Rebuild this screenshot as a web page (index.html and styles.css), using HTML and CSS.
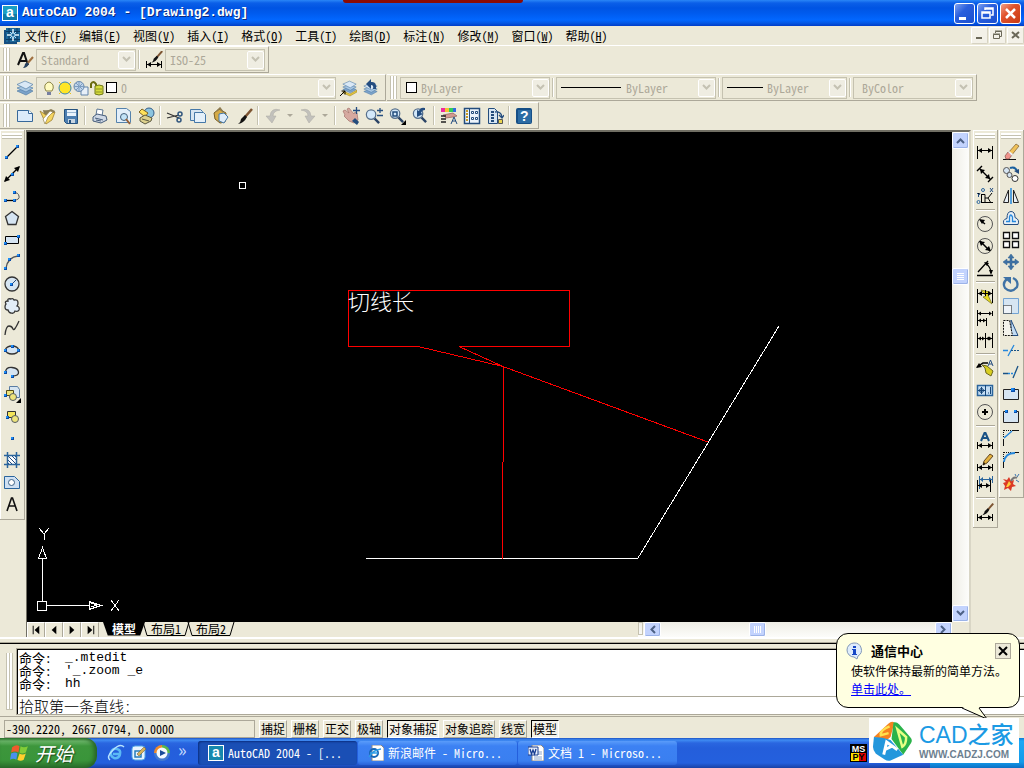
FILE: index.html
```html
<!DOCTYPE html>
<html lang="zh-CN">
<head>
<meta charset="utf-8">
<title>AutoCAD 2004 - [Drawing2.dwg]</title>
<link rel="stylesheet" href="styles.css">
</head>
<body>
<svg class="defs" aria-hidden="true">
  <symbol id="pt" viewBox="0 0 3 3"><path d="M0 0h3v3H0z" fill="#0a4ca8"/><path d="M0 0h2v2H0z" fill="#1c8cf4"/></symbol>
  <symbol id="chev" viewBox="0 0 9 7"><path d="M1 1l3.500 3.500L8 1" fill="none" stroke="currentColor" stroke-width="2"/></symbol>
  <symbol id="hdim" viewBox="0 0 18 18"><path d="M1.500 9v7M16.500 9v7M2 12.500h14" stroke="#000" fill="none"/><path d="M2 12.500l4-2.500v5zM16 12.500l-4-2.500v5z"/></symbol>
  <symbol id="sheets" viewBox="0 0 18 18"><g stroke="#5580a8" stroke-width="0.700"><path d="M1 12l8-3 8 3-7 4z" fill="#7ba3ca"/><path d="M1 9l8-3 8 3-7 4z" fill="#a7c6e2"/><path d="M1 5.500L9 2l8 3.500L10 10z" fill="#d9e8f6"/></g></symbol>
  <symbol id="lens" viewBox="0 0 18 18"><path d="M11 11l5 5" stroke="#2b4466" stroke-width="2.500"/><circle cx="7.500" cy="7" r="5" fill="#d3e8fa" stroke="#57708c" stroke-width="1.300"/></symbol>
  <symbol id="brush" viewBox="0 0 18 18"><path d="M17 2l-7 8" stroke="#7d5432" stroke-width="2.500"/><path d="M10 8l2 2q-3 6-9 7 3-2 3-5z" fill="#111"/></symbol>
</svg>

<header class="titlebar">
  <svg class="appicon" viewBox="0 0 16 16"><path d="M0 0h16v16H0z" fill="#fff"/><path d="M1 1h14v14H1z" fill="#1a9fc4"/><path d="M1 9h14v6H1z" fill="#0d7ba6"/><text x="4" y="12" class="appletter">a</text></svg>
  <h1 class="title">AutoCAD 2004 - [Drawing2.dwg]</h1>
  <div class="winbtns">
    <button class="wbtn" aria-label="最小化"><svg viewBox="0 0 19 19"><path d="M4 13h7v3H4z" fill="#fff"/></svg></button>
    <button class="wbtn" aria-label="还原"><svg viewBox="0 0 19 19"><path d="M7 6V4h8v7h-2M4 8h8v6H4zM4 9h8M7 5h8" fill="none" stroke="#fff" stroke-width="1.500"/></svg></button>
    <button class="wbtn close" aria-label="关闭"><svg viewBox="0 0 19 19"><path d="M5 5l9 9M14 5l-9 9" stroke="#fff" stroke-width="2.500"/></svg></button>
  </div>
</header>
<div class="redtab"></div>

<nav class="menubar">
  <svg class="docicon" viewBox="0 0 16 16"><path d="M0 2h13v14H0z" fill="#164e80"/><path d="M2 0h14v14H2z" fill="#1c6799"/><path d="M5 0v14M13 0v14M2 3.500h14M2 11.500h14" stroke="#0c3b63"/><path d="M9 1v12M3 7h12" stroke="#e4f6ff" stroke-width="1.500"/><path d="M6 4l6 6M12 4l-6 6" stroke="#aee3ff"/><circle cx="9" cy="7" r="1.500" fill="#1c6799"/></svg>
  <button class="menu">文件(<u>F</u>)</button>
  <button class="menu">编辑(<u>E</u>)</button>
  <button class="menu">视图(<u>V</u>)</button>
  <button class="menu">插入(<u>I</u>)</button>
  <button class="menu">格式(<u>O</u>)</button>
  <button class="menu">工具(<u>T</u>)</button>
  <button class="menu">绘图(<u>D</u>)</button>
  <button class="menu">标注(<u>N</u>)</button>
  <button class="menu">修改(<u>M</u>)</button>
  <button class="menu">窗口(<u>W</u>)</button>
  <button class="menu">帮助(<u>H</u>)</button>
  <div class="mdibtns">
    <button class="mbtn" aria-label="最小化文档"><svg viewBox="0 0 15 15"><path d="M4 9h6v2H4z" fill="#6b6858"/></svg></button>
    <button class="mbtn" aria-label="还原文档"><svg viewBox="0 0 15 15"><path d="M5.500 5V3.500h6v5H10M3.500 6.500h6v4h-6zM3 6h7M5 3h7" fill="none" stroke="#6b6858"/></svg></button>
    <button class="mbtn" aria-label="关闭文档"><svg viewBox="0 0 15 15"><path d="M4 4l7 6M11 4l-7 6" stroke="#6b6858" stroke-width="2"/></svg></button>
  </div>
</nav>

<div class="dock">
  <div class="toolbar">
    <i class="grip"></i>
    <button class="tb" aria-label="文字样式"><svg class="ico" viewBox="0 0 18 18"><path d="M2 14L7 2h1l4 12M4 10h6" fill="none" stroke="#111" stroke-width="2"/><path d="M17 6l-7 8" stroke="#a07040" stroke-width="2"/><path d="M11 11l2 2q-2 4-6 4 2-2 2-4z" fill="#26405e"/></svg></button>
    <div class="combo w100"><select disabled aria-label="文字样式"><option>Standard</option></select><span class="drop"><svg><use href="#chev"/></svg></span></div>
    <i class="sep"></i>
    <button class="tb" aria-label="标注样式"><svg class="ico" viewBox="0 0 18 18"><use href="#brush" x="4" y="-2" width="14" height="15"/><path d="M1.500 10v7M16.500 10v7M2 13.500h14" stroke="#000"/><path d="M2 13.500l4-2.500v5zM16 13.500l-4-2.500v5z"/></svg></button>
    <div class="combo w100"><select disabled aria-label="标注样式"><option>ISO-25</option></select><span class="drop"><svg><use href="#chev"/></svg></span></div>
  </div>
</div>

<div class="dock">
  <div class="toolbar">
    <i class="grip"></i>
    <button class="tb" aria-label="图层特性管理器"><svg class="ico"><use href="#sheets"/></svg></button>
    <div class="combo w300">
      <svg class="mini" viewBox="0 0 16 16"><path d="M5 11Q3 8 4 5q4-6 8 0 1 3-1 6z" fill="#fffbc0" stroke="#8d8548"/><path d="M6 12h4v3H6z" fill="#777fa0"/></svg>
      <svg class="mini" viewBox="0 0 16 16"><circle cx="8" cy="8" r="6" fill="#ffe526" stroke="#3b86b8"/><path d="M2 2l2 2M14 2l-2 2M2 14l2-2M14 14l-2-2" stroke="#e5c21a"/></svg>
      <svg class="mini" viewBox="0 0 16 16"><path d="M8 7h7v8H8z" fill="#e8f0f8" stroke="#6384aa"/><circle cx="6" cy="6.500" r="5" fill="#c0d4ea" stroke="#6384aa"/><path d="M6 1v11M1 6.500h10M3 3l7 7M10 3l-7 7" stroke="#7d9dc0"/></svg>
      <svg class="mini" viewBox="0 0 16 16"><path d="M2 8V4q2-4 5 0v3" fill="none" stroke="#6a6a10" stroke-width="2"/><path d="M6 6q4-2 8 0v8q-4 2-8 0z" fill="#d6dc3c" stroke="#6e7618"/><path d="M7 9h6M7 12h6" stroke="#8d9422"/></svg>
      <i class="swatch"></i>
      <select disabled aria-label="图层"><option>0</option></select><span class="drop"><svg><use href="#chev"/></svg></span>
    </div>
    <button class="tb" aria-label="将对象的图层置为当前"><svg class="ico" viewBox="0 0 18 18"><use href="#sheets" x="3" y="0" width="15" height="16"/><path d="M4 12l7 3 7-4v2l-7 4-7-3z" fill="#e8c93a" stroke="#8c7820" stroke-width="0.500"/><path d="M1 17l5-5M2.500 12H6v3.500" stroke="#000" fill="none"/></svg></button>
    <button class="tb" aria-label="上一个图层"><svg class="ico" viewBox="0 0 18 18"><use href="#sheets" x="1" y="2" width="15" height="16"/><path d="M14 10Q15 2 9 3V0L4 5l5 5V6q3 0 2 4z" fill="#244d80"/></svg></button>
  </div>
  <div class="toolbar">
    <i class="grip"></i>
    <div class="combo w150"><i class="swatch"></i><select disabled aria-label="颜色控制"><option>ByLayer</option></select><span class="drop"><svg><use href="#chev"/></svg></span></div>
    <i class="sep"></i>
    <div class="combo w160"><i class="rule long"></i><select disabled aria-label="线型控制"><option>ByLayer</option></select><span class="drop"><svg><use href="#chev"/></svg></span></div>
    <i class="sep"></i>
    <div class="combo w125"><i class="rule"></i><select disabled aria-label="线宽控制"><option>ByLayer</option></select><span class="drop"><svg><use href="#chev"/></svg></span></div>
    <i class="sep"></i>
    <div class="combo w120 plain"><select disabled aria-label="打印样式控制"><option>ByColor</option></select><span class="drop"><svg><use href="#chev"/></svg></span></div>
  </div>
</div>

<div class="dock">
  <div class="toolbar std">
    <i class="grip"></i>
    <button class="tb" aria-label="新建"><svg class="ico" viewBox="0 0 18 18"><path d="M1.500 3.500h11l4 3v8h-15z" fill="#dcebfa" stroke="#37689a"/><path d="M12.500 3.500v3h4" fill="#fff" stroke="#37689a"/></svg></button>
    <button class="tb" aria-label="打开"><svg class="ico" viewBox="0 0 18 18"><path d="M4 3q5 1 8-1l4 2-4 9H6z" fill="#8a7d55"/><path d="M1 4l6 4 9-3-3 8-6 4z" fill="#f5d560" stroke="#95752a" stroke-width="0.700"/><path d="M4 12l7-8 3 1-5 5-3 7z" fill="#fff" stroke="#96854b" stroke-width="0.700"/></svg></button>
    <button class="tb" aria-label="保存"><svg class="ico" viewBox="0 0 18 18"><path d="M2.500 2.500h13v14h-11l-2-2z" fill="#4c7eb0" stroke="#25527f"/><path d="M5 3h9v6H5z" fill="#e9f3fc"/><path d="M5 5.500h9" stroke="#9bb8d3"/><path d="M6 12h7v4H6z" fill="#c7d5e2"/><path d="M7 13h2v3H7z" fill="#25527f"/></svg></button>
    <i class="sep"></i>
    <button class="tb" aria-label="打印"><svg class="ico" viewBox="0 0 18 18"><path d="M5 8l1-6 6 1-1 6" fill="#fff" stroke="#5c7794"/><path d="M2 10l4-3 9 2 1 4-6 3-8-2z" fill="#ced8e5" stroke="#465c7a"/><path d="M4 11l8 2M5 13l5 1" stroke="#465c7a"/></svg></button>
    <button class="tb" aria-label="打印预览"><svg class="ico" viewBox="0 0 18 18"><path d="M2.500 1.500h10l4 3v11h-14z" fill="#e3effa" stroke="#5582ac"/><circle cx="10" cy="10" r="3.500" fill="#c3e3f7" stroke="#45617c"/><path d="M12 12l4 5" stroke="#965e34" stroke-width="2"/></svg></button>
    <button class="tb" aria-label="发布"><svg class="ico" viewBox="0 0 18 18"><circle cx="12" cy="6" r="5" fill="#8cc4de" stroke="#345c88"/><path d="M2 5l3-3 6 4-3 4z" fill="#ffe25a" stroke="#806420"/><path d="M3 11l5-3 7 3-1 3-6 3-5-3z" fill="#ddd18d" stroke="#5b5942"/><path d="M5 12l7 2" stroke="#5b5942"/></svg></button>
    <i class="sep"></i>
    <button class="tb" aria-label="剪切"><svg class="ico" viewBox="0 0 18 18"><path d="M1 6l12 5M1 11l12-3" stroke="#333" stroke-width="1.200"/><circle cx="14" cy="7" r="2" fill="none" stroke="#31567e" stroke-width="1.500"/><circle cx="13" cy="13" r="2" fill="none" stroke="#31567e" stroke-width="1.500"/></svg></button>
    <button class="tb" aria-label="复制"><svg class="ico" viewBox="0 0 18 18"><path d="M1.500 2.500h10l2 2v9h-12z" fill="#d6e5f2" stroke="#4578a8"/><path d="M5.500 5.500h9l2 2v8h-11z" fill="#e4f0fa" stroke="#4578a8"/></svg></button>
    <button class="tb" aria-label="粘贴"><svg class="ico" viewBox="0 0 18 18"><path d="M2 6l5-4 7 4-1 9-5 1-5-4z" fill="#d5ab48" stroke="#755d28"/><path d="M7 7l5-1 4 4-4 6-5-2z" fill="#deecf9" stroke="#4578a8"/><path d="M5 4l3-3 3 4" fill="none" stroke="#8d7b50" stroke-width="1.500"/></svg></button>
    <button class="tb" aria-label="特性匹配"><svg class="ico"><use href="#brush"/></svg></button>
    <i class="sep"></i>
    <button class="tb" disabled aria-label="放弃"><svg class="ico" viewBox="0 0 18 18"><path d="M16 3Q7 0 6 9H2l6 7 4-7H9q0-5 7-6z" fill="#c2c1bc" stroke="#aaa9a3" stroke-width="0.500"/></svg></button><button class="tiny" disabled aria-label="放弃列表"><i></i></button>
    <button class="tb" disabled aria-label="重做"><svg class="ico" viewBox="0 0 18 18"><path d="M2 3q9-3 10 6h4l-6 7-4-7h3Q9 4 2 3z" fill="#c2c1bc" stroke="#aaa9a3" stroke-width="0.500"/></svg></button><button class="tiny" disabled aria-label="重做列表"><i></i></button>
    <i class="sep wide"></i>
    <button class="tb" aria-label="实时平移"><svg class="ico" viewBox="0 0 18 18"><path d="M1 4l2-1 4 3-2-4 2-1 5 6 1-2 2 1 1 7-4 3-5-2-5-5 1-1z" fill="#d6a9a0" stroke="#a4736c" stroke-width="0.700"/><path d="M10 14l3-3 4 4-2 3z" fill="#234c7c"/><path d="M14.500 0v7M11 3.500h7" stroke="#244d80" stroke-width="1.300"/></svg></button>
    <button class="tb" aria-label="实时缩放"><svg class="ico" viewBox="0 0 18 18"><use href="#lens" x="-1" y="1" width="17" height="17"/><path d="M12 3.500h6M15 1v5M12 8.500h6" stroke="#264f80" stroke-width="1.300"/></svg></button>
    <button class="tb" aria-label="窗口缩放"><svg class="ico" viewBox="0 0 18 18"><use href="#lens" width="17" height="17"/><path d="M5 5h4v4H5z" fill="none" stroke="#234c7c" stroke-width="1.500"/><path d="M18 13v5h-5z"/></svg></button>
    <button class="tb" aria-label="缩放上一个"><svg class="ico" viewBox="0 0 18 18"><use href="#lens" width="17" height="17"/><path d="M14 1q-5-1-6 3L6 3v7l6-3-2-1q1-3 4-3z" fill="#244d80"/></svg></button>
    <i class="sep"></i>
    <button class="tb" aria-label="特性"><svg class="ico" viewBox="0 0 18 18"><path d="M1 1h4v4H1z" fill="#f0289d"/><path d="M5 1h4v4H5z" fill="#f5c331"/><path d="M9 1h4v4H9z" fill="#30cc5a"/><path d="M13 1h3v4h-3z" fill="#316be0"/><path d="M3 8l10-2 4 3-4 1-7 1z" fill="#d39a91" stroke="#8b5d58" stroke-width="0.700"/><path d="M1 9h5M1 12h5M1 15h5" stroke="#222" stroke-width="1.500"/><path d="M11 17l3-7 3 7M12 14h4" fill="none" stroke="#244d80"/></svg></button>
    <button class="tb" aria-label="设计中心"><svg class="ico" viewBox="0 0 18 18"><path d="M1.500 1.500h15v15h-15z" fill="#edf4fb" stroke="#234c7c" stroke-width="1.500"/><path d="M6.500 1v16" stroke="#234c7c"/><path d="M3 4h2M3 7h2M3 10h2M3 13h2" stroke="#c59a24" stroke-width="2"/><path d="M8.500 4.500h2v2h-2zM12.500 4.500h2v2h-2zM8.500 10.500h2v2h-2zM12.500 10.500h2v2h-2z" fill="#fff" stroke="#234c7c"/></svg></button>
    <button class="tb" aria-label="工具选项板"><svg class="ico" viewBox="0 0 18 18"><path d="M2.500 1.500h6l3 3v12h-9z" fill="#d6e5f2" stroke="#234c7c"/><path d="M5 5h3M5 8h3M5 11h3M5 14h3" stroke="#234c7c" stroke-width="2"/><path d="M9 5q6-1 7 5m-3-2l3 3 2-3" fill="none" stroke="#244d80" stroke-width="1.300"/><path d="M12.500 12.500h4v4h-4z" fill="#e9d44f" stroke="#555"/></svg></button>
    <i class="sep"></i>
    <button class="tb" aria-label="帮助"><svg class="ico" viewBox="0 0 18 18"><rect x="1" y="1" width="16" height="16" rx="2" fill="#164f86"/><path d="M3 3h13v13H3z" fill="#2c6ca4"/><text x="5" y="14" class="qmark">?</text></svg></button>
  </div>
</div>

<main class="work">
  <div class="vbar draw">
    <i class="vgrip"></i>
    <button class="tb" aria-label="直线"><svg class="ico" viewBox="0 0 18 18"><path d="M4 14L14 4" stroke="#000" stroke-width="1.300"/><use href="#pt" x="2" y="13" width="3" height="3"/><use href="#pt" x="13" y="2" width="3" height="3"/></svg></button>
    <button class="tb" aria-label="构造线"><svg class="ico" viewBox="0 0 18 18"><path d="M2 16L16 2" stroke="#000" stroke-width="1.300"/><path d="M1 17l2-6 4 4zM17 1l-2 6-4-4z"/><use href="#pt" x="8" y="8" width="3" height="3"/></svg></button>
    <button class="tb" aria-label="多段线"><svg class="ico" viewBox="0 0 18 18"><path d="M2 13.500h9" stroke="#000" stroke-width="1.300"/><path d="M11 13q6 0 5-4t-5-3" fill="none" stroke="#555"/><use href="#pt" x="1" y="12" width="3" height="3"/><use href="#pt" x="10" y="12" width="3" height="3"/><use href="#pt" x="10" y="4" width="3" height="3"/></svg></button>
    <button class="tb" aria-label="正多边形"><svg class="ico" viewBox="0 0 18 18"><path d="M9 2.500l6.500 5-2.500 8H5l-2.500-8z" fill="#d6e5f2" stroke="#333" stroke-width="1.300"/></svg></button>
    <button class="tb" aria-label="矩形"><svg class="ico" viewBox="0 0 18 18"><path d="M2.500 5.500h13v7h-13z" fill="#d6e5f2" stroke="#000"/><use href="#pt" x="1" y="11" width="3" height="3"/><use href="#pt" x="14" y="4" width="3" height="3"/></svg></button>
    <button class="tb" aria-label="圆弧"><svg class="ico" viewBox="0 0 18 18"><path d="M3 15Q5 4 15 3" fill="none" stroke="#555" stroke-width="1.300"/><use href="#pt" x="1" y="14" width="3" height="3"/><use href="#pt" x="5" y="5" width="3" height="3"/><use href="#pt" x="14" y="1" width="3" height="3"/></svg></button>
    <button class="tb" aria-label="圆"><svg class="ico" viewBox="0 0 18 18"><circle cx="9" cy="9" r="7" fill="#d6e5f2" stroke="#333" stroke-width="1.300"/><path d="M9 9l4-4" stroke="#244d80"/><use href="#pt" x="7" y="8" width="3" height="3"/></svg></button>
    <button class="tb" aria-label="修订云线"><svg class="ico" viewBox="0 0 18 18"><path d="M5 4Q4 1 8 2q2-1 3 1 4-1 4 3 0 2-1 3 3 1 2 4-1 2-4 1-1 3-4 2-2 0-3-3-3 0-3-3 0-2 1-3-2-3 2-3z" fill="#e2edf7" stroke="#333" stroke-width="1.300"/></svg></button>
    <button class="tb" aria-label="样条曲线"><svg class="ico" viewBox="0 0 18 18"><path d="M2 16Q3 7 6 7t4 3 6-8" fill="none" stroke="#333" stroke-width="1.300"/></svg></button>
    <button class="tb" aria-label="椭圆"><svg class="ico" viewBox="0 0 18 18"><ellipse cx="9" cy="9" rx="6.500" ry="4" fill="#d6e5f2" stroke="#333" stroke-width="1.300"/><use href="#pt" x="1" y="8" width="3" height="3"/><use href="#pt" x="14" y="8" width="3" height="3"/><use href="#pt" x="8" y="4" width="3" height="3"/></svg></button>
    <button class="tb" aria-label="椭圆弧"><svg class="ico" viewBox="0 0 18 18"><path d="M2.500 9Q3 4 9 4.500t6.500 4.500-6.500 4" fill="#d6e5f2" stroke="#333" stroke-width="1.300"/><use href="#pt" x="1" y="8" width="3" height="3"/><use href="#pt" x="8" y="12" width="3" height="3"/></svg></button>
    <button class="tb" aria-label="插入块"><svg class="ico" viewBox="0 0 18 18"><path d="M6.500 1.500h8l2 3v8h-10z" fill="#d6e5f2" stroke="#597ca3"/><path d="M3.500 5.500h7v5h-7z" fill="#eee47c" stroke="#554d16"/><circle cx="10" cy="12" r="3.500" fill="#eee47c" stroke="#555c62"/><use href="#pt" x="1" y="9" width="3" height="3"/><path d="M18 13v5h-5z"/></svg></button>
    <button class="tb" aria-label="创建块"><svg class="ico" viewBox="0 0 18 18"><path d="M4.500 4.500h8v6h-8z" fill="#f3e45a" stroke="#333"/><circle cx="12" cy="12" r="3.500" fill="#eee47c" stroke="#555c62"/><use href="#pt" x="3" y="9" width="3" height="3"/></svg></button>
    <button class="tb" aria-label="点"><svg class="ico" viewBox="0 0 18 18"><use href="#pt" x="8" y="8" width="3" height="3"/></svg></button>
    <button class="tb" aria-label="图案填充"><svg class="ico" viewBox="0 0 18 18"><path d="M4 4h10v10H4z" fill="#fff"/><path d="M4 8l6 6M4 4l10 10M8 4l6 6M4 11l3 3M11 4l3 3" stroke="#244d80"/><path d="M4.500 1v16M13.500 1v16M1 4.500h16M1 13.500h16" stroke="#2b659d" stroke-width="1.500"/></svg></button>
    <button class="tb" aria-label="面域"><svg class="ico" viewBox="0 0 18 18"><path d="M1.500 3.500h10l5 5v7h-15z" fill="#cfe0f2" stroke="#2b659d"/><circle cx="8.500" cy="9.500" r="3" fill="#fff" stroke="#3c6286"/></svg></button>
    <button class="tb" aria-label="多行文字"><svg class="ico" viewBox="0 0 18 18"><path d="M4 16L8.500 3h1L14 16M6 11h6" fill="none" stroke="#111" stroke-width="1.600"/></svg></button>
  </div>

  <section class="viewport">
    <svg class="canvas" role="img" aria-label="图形">
      <g class="crisp">
        <path class="wht" d="M212.500 50.500h6v6h-6zM339 426.500h272M10.500 469.500h9v9h-9zM15.500 469v-42M20 473.500h42M15.500 415.500l-4 11h8z"/>
        <path class="wht" d="M611 426l141-232M62 469.500l12 4-12 4zM64 471l6 2-6 2"/>
        <path class="red" d="M391.500 214.500h-70v-56h221v56h-110"/>
        <path class="red" d="M476.500 234v96"/>
        <path class="red" d="M475.500 330v97"/>
        <path class="red" d="M391 214.500l85 20 205 75.500M432 214.500l44 20"/>
        <path class="wht" d="M12 396l5 6v6M22 396l-5 6M84 468l8 11M92 468l-8 11"/>
      </g>
      <text x="321" y="178" class="note">切线长</text>
    </svg>
    <div class="vscroll">
      <button class="sb" aria-label="向上滚动"><svg class="up"><use href="#chev"/></svg></button>
      <i class="track before"></i>
      <span class="vthumb"><i></i><i></i><i></i><i></i></span>
      <i class="track after"></i>
      <button class="sb" aria-label="向下滚动"><svg><use href="#chev"/></svg></button>
    </div>
    <div class="tabrow">
      <button class="nav" aria-label="第一个"><svg viewBox="0 0 17 14"><path d="M5 3h1v9H5zM12 3v9L7 7.500z"/></svg></button>
      <button class="nav" aria-label="上一个"><svg viewBox="0 0 17 14"><path d="M11 3v9L6 7.500z"/></svg></button>
      <button class="nav" aria-label="下一个"><svg viewBox="0 0 17 14"><path d="M6 3v9l5-4.500z"/></svg></button>
      <button class="nav" aria-label="最后一个"><svg viewBox="0 0 17 14"><path d="M12 3h1v9h-1zM6 3v9l5-4.500z"/></svg></button>
      <div class="tabs">
        <button class="tab on"><svg viewBox="0 0 44 14" preserveAspectRatio="none"><path d="M0 0l5 13.500h34L44 0z" fill="#000"/></svg><span>模型</span></button>
        <button class="tab"><svg viewBox="0 0 48 14" preserveAspectRatio="none"><path d="M1 0l4 13.500h38L47 0" fill="none" stroke="#000"/></svg><span>布局1</span></button>
        <button class="tab"><svg viewBox="0 0 48 14" preserveAspectRatio="none"><path d="M1 0l4 13.500h38L47 0" fill="none" stroke="#000"/></svg><span>布局2</span></button>
      </div>
      <div class="hscroll">
        <i class="split"></i>
        <button class="sb" aria-label="向左滚动"><svg class="left"><use href="#chev"/></svg></button>
        <i class="track before"></i>
        <span class="hthumb"><i></i><i></i><i></i><i></i></span>
        <i class="track rest"></i>
        <button class="sb" aria-label="向右滚动"><svg class="right"><use href="#chev"/></svg></button>
      </div>
    </div>
    <div class="corner"></div>
  </section>

  <div class="vbar dims">
    <i class="vgrip"></i>
    <button class="tb" aria-label="线性标注"><svg class="ico" viewBox="0 0 18 18"><path d="M1.500 3v13M16.500 3v13M2 7.500h14" stroke="#000"/><path d="M2 7.500L6 5v5zM16 7.500L12 5v5z"/></svg></button>
    <button class="tb" aria-label="对齐标注"><svg class="ico" viewBox="0 0 18 18"><path d="M1 6l5-5M12 17l5-5M4 4l10 10" stroke="#000" stroke-width="1.400"/><path d="M4 4l5 1-4 4zM14 14l-5-1 4-4z"/></svg></button>
    <button class="tb" aria-label="坐标标注"><svg class="ico" viewBox="0 0 18 18"><path d="M6 7.500h3v8M6 15.500h11M5.500 7v9M9 11h3l4-5M12 11l3 5" stroke="#000" fill="none"/><path d="M14 1l3 4M17 1l-3 4M1 6l2 2 1-2M2.500 8v2" stroke="#244d80"/><circle cx="7" cy="3" r="1.500" fill="none" stroke="#2b659d"/><circle cx="2.500" cy="15" r="1.500" fill="none" stroke="#2b659d"/></svg></button>
    <i class="vsep"></i>
    <button class="tb" aria-label="半径标注"><svg class="ico" viewBox="0 0 18 18"><circle cx="9" cy="9" r="7.500" fill="none" stroke="#555"/><path d="M9 9L4 5" stroke="#000" stroke-width="1.500"/><path d="M3 4l6 1-3 4z"/></svg></button>
    <button class="tb" aria-label="直径标注"><svg class="ico" viewBox="0 0 18 18"><circle cx="9" cy="9" r="7.500" fill="none" stroke="#555"/><path d="M4 4l10 10" stroke="#000" stroke-width="1.500"/><path d="M3 4l6 1-4 4zM15 14l-6-1 4-4z"/></svg></button>
    <button class="tb" aria-label="角度标注"><svg class="ico" viewBox="0 0 18 18"><path d="M1 16.500h16M2 13L12 2M9 4q6 4 6 10" stroke="#000" stroke-width="1.300" fill="none"/><path d="M15 16l-2-5h4zM8 3l5 1-2 3z"/></svg></button>
    <i class="vsep"></i>
    <button class="tb" aria-label="快速标注"><svg class="ico" viewBox="0 0 18 18"><path d="M5 3l9 2-2 3 4 9-9-7 3-1z" fill="#e6da1e" stroke="#6d6820" stroke-width="0.700"/><path d="M1.500 2v14M16.500 2v14M2 6.500h14M9.500 3v6" stroke="#000"/><path d="M2 6.500L6 4v5zM16 6.500L12 4v5z"/></svg></button>
    <button class="tb" aria-label="基线标注"><svg class="ico" viewBox="0 0 18 18"><path d="M1.500 1v16M2 4.500h13M16.500 2v5M2 11.500h8M10.500 9v8" stroke="#000"/><path d="M2 4.500l3-2v4zM16 4.500l-3-2v4zM2 11.500l3-2v4zM10 11.500l-3-2v4z"/></svg></button>
    <button class="tb" aria-label="连续标注"><svg class="ico" viewBox="0 0 18 18"><path d="M1.500 2v15M9.500 2v15M16.500 2v15M2 7.500h14" stroke="#000"/><path d="M2 7.500l3-2v4zM9 7.500l-3-2v4zM10 7.500l3-2v4zM16 7.500l-3-2v4z"/></svg></button>
    <i class="vsep"></i>
    <button class="tb" aria-label="快速引线"><svg class="ico" viewBox="0 0 18 18"><path d="M6 6l5 1 6 5-2 5-5-3-1-5z" fill="#d8ce22" stroke="#6d6820"/><path d="M1 8l6-4h5" fill="none" stroke="#000" stroke-width="1.500"/><path d="M0 9l3-5 3 4z"/><path d="M12 7l2.500-6L17 7M13 5h3" fill="none" stroke="#244d80"/></svg></button>
    <button class="tb" aria-label="公差"><svg class="ico" viewBox="0 0 18 18"><path d="M1.500 4.500h15v10h-15z" fill="#c5def4" stroke="#2b659d" stroke-width="1.500"/><path d="M9.500 4v11M5.500 6v7M2 9.500h7M12 12h1M14.500 6v7" stroke="#174677"/><circle cx="5.500" cy="9.500" r="2" fill="none" stroke="#174677"/></svg></button>
    <button class="tb" aria-label="圆心标记"><svg class="ico" viewBox="0 0 18 18"><circle cx="9" cy="9" r="7.500" fill="none" stroke="#555"/><path d="M9 6v6M6 9h6" stroke="#000" stroke-width="2"/></svg></button>
    <i class="vsep"></i>
    <button class="tb" aria-label="编辑标注"><svg class="ico" viewBox="0 0 18 18"><use href="#hdim" y="2" width="18" height="18"/><path d="M5 10L8.500 2h1L13 10M6.500 7h5" fill="none" stroke="#195285" stroke-width="2"/></svg></button>
    <button class="tb" aria-label="编辑标注文字"><svg class="ico" viewBox="0 0 18 18"><use href="#hdim" y="2" width="18" height="18"/><path d="M7 12l1-4 6-7 3 2-6 7z" fill="#e4b13d" stroke="#634724"/><path d="M7 12l2-1-1-2z"/></svg></button>
    <button class="tb" aria-label="标注更新"><svg class="ico" viewBox="0 0 18 18"><path d="M3.500 1v13M16.500 1v7M4 4.500h12" stroke="#2b659d"/><path d="M4 4.500L7 2v5zM16 4.500L13 2v5z" fill="#2b659d"/><path d="M1.500 5v12M14.500 5v12M2 10.500h12" stroke="#000"/><path d="M2 10.500L6 8v5zM14 10.500L10 8v5z"/></svg></button>
    <i class="vsep"></i>
    <button class="tb" aria-label="标注样式管理"><svg class="ico" viewBox="0 0 18 18"><use href="#brush" x="4" y="-1" width="14" height="14"/><use href="#hdim" y="2" width="18" height="18"/></svg></button>
  </div>

  <div class="vbar modify">
    <i class="vgrip"></i>
    <button class="tb" aria-label="删除"><svg class="ico" viewBox="0 0 18 18"><path d="M1 16.500h13" stroke="#111"/><path d="M6 10l8-9 3 2-8 10z" fill="#f0c25a" stroke="#7a5a28" stroke-width="0.700"/><path d="M3 13l3-4 4 3-3 4H4z" fill="#f1948b" stroke="#834e48" stroke-width="0.700"/><path d="M6 9l1-1 4 3-1 2z" fill="#eef2f8"/></svg></button>
    <button class="tb" aria-label="复制对象"><svg class="ico" viewBox="0 0 18 18"><circle cx="4.500" cy="5.500" r="3" fill="#d6e5f2" stroke="#555"/><circle cx="7.500" cy="10" r="2.500" fill="#d6e5f2" stroke="#555"/><circle cx="13" cy="13.500" r="3" fill="#fff" stroke="#333"/><path d="M8 3q5-2 7 3" fill="none" stroke="#195f9f" stroke-width="2"/><path d="M17 4v5l-5-3z" fill="#244d80"/></svg></button>
    <button class="tb" aria-label="镜像"><svg class="ico" viewBox="0 0 18 18"><path d="M1.500 15.500h5V3zM16.500 15.500h-5V3z" fill="#e9f0f6" stroke="#222"/><path d="M9 1v16" stroke="#2587dc" stroke-width="1.500"/></svg></button>
    <button class="tb" aria-label="偏移"><svg class="ico" viewBox="0 0 18 18"><path d="M2 15.500q-2-5 3-6 0-7 4-7t4 6q5 2 3 7z" fill="#e9f0f6" stroke="#244d80"/><path d="M4 12.500h3.500V8q1-4 3 0v4.500H14" fill="none" stroke="#2587dc" stroke-width="1.300"/></svg></button>
    <button class="tb" aria-label="阵列"><svg class="ico" viewBox="0 0 18 18"><path d="M1.500 1.500h6v6h-6zM10.500 1.500h6v6h-6zM1.500 10.500h6v6h-6zM10.500 10.500h6v6h-6z" fill="#fff" stroke="#111" stroke-width="1.300"/></svg></button>
    <button class="tb" aria-label="移动"><svg class="ico" viewBox="0 0 18 18"><path d="M9 1l3 4h-2v3h3V6l4 3-4 3v-2h-3v3h2l-3 4-3-4h2v-3H5v2L1 9l4-3v2h3V5H6z" fill="#3f72a5" stroke="#31608e" stroke-width="0.500"/></svg></button>
    <button class="tb" aria-label="旋转"><svg class="ico" viewBox="0 0 18 18"><path d="M5 4q-5 4-2 9 6 6 12-1 2-6-4-9" fill="none" stroke="#3f72a5" stroke-width="2.300"/><path d="M1 2h8v7z" fill="#3f72a5"/></svg></button>
    <button class="tb" aria-label="缩放"><svg class="ico" viewBox="0 0 18 18"><path d="M1.500 1.500h15v15h-15z" fill="#d6e5f2" stroke="#73a3d2"/><path d="M1.500 8.500h8v8h-8z" fill="#eef3f8" stroke="#111" stroke-dasharray="1 1"/></svg></button>
    <button class="tb" aria-label="拉伸"><svg class="ico" viewBox="0 0 18 18"><path d="M9 1l7 15.500H9z" fill="#c3dcf3" stroke="#244d80"/><path d="M1.500 1.500h6l3 15h-9z" fill="#f4f3eb" stroke="#111" stroke-dasharray="2 1"/></svg></button>
    <button class="tb" aria-label="修剪"><svg class="ico" viewBox="0 0 18 18"><path d="M1 9.500h5M6 15l6-11" stroke="#2587dc" stroke-width="1.300"/><path d="M9 9.500h8" stroke="#195285" stroke-dasharray="2 1"/></svg></button>
    <button class="tb" aria-label="延伸"><svg class="ico" viewBox="0 0 18 18"><path d="M11 15l5-12M1 10.500h5" stroke="#195285" stroke-width="1.300"/><path d="M6 10.500h7" stroke="#2587dc" stroke-width="1.300" stroke-dasharray="2 1"/></svg></button>
    <button class="tb" aria-label="打断于点"><svg class="ico" viewBox="0 0 18 18"><path d="M1.500 4.500h15v10h-15z" fill="#d6e5f2" stroke="#222"/><use href="#pt" x="9" y="3" width="4" height="4"/></svg></button>
    <button class="tb" aria-label="打断"><svg class="ico" viewBox="0 0 18 18"><path d="M4 4.500H1.500v11h15v-11H14" fill="#d6e5f2" stroke="#222"/><use href="#pt" x="3" y="3" width="3" height="3"/><use href="#pt" x="12" y="3" width="3" height="3"/></svg></button>
    <button class="tb" aria-label="倒角"><svg class="ico" viewBox="0 0 18 18"><path d="M1.500 10v7M10 1.500h7" stroke="#111"/><path d="M1.500 1v8M2 1.500h8" stroke="#111" stroke-dasharray="1 1"/><path d="M2 9l8-7" stroke="#2587dc" stroke-width="1.500"/></svg></button>
    <button class="tb" aria-label="圆角"><svg class="ico" viewBox="0 0 18 18"><path d="M1.500 10v7M12 1.500h5" stroke="#111"/><path d="M1.500 1v8M2 1.500h8" stroke="#111" stroke-dasharray="1 1"/><path d="M2 11q1-9 11-9" fill="none" stroke="#2587dc" stroke-width="1.800"/></svg></button>
    <button class="tb" aria-label="分解"><svg class="ico" viewBox="0 0 18 18"><path d="M1 6l4 1 2-3 2 4 3-1-1 4 3 2-4 1-1 4-3-3-4 2 1-4-2-3 3-1z" fill="#db3925"/><path d="M4 14l3-6 2 3-3 3z" fill="#ffcd38"/><path d="M9 8q3-5 6-3" fill="none" stroke="#777" stroke-width="2"/><path d="M13 1l1 2M17 1l-2 3M14 7l3 2" stroke="#3772ac"/></svg></button>
  </div>
</main>

<section class="cmdarea">
  <i class="cmdgrip"></i>
  <div class="cmdbox">
    <div class="log">
      <p><span class="who">命令:</span><span class="mono">_.mtedit</span></p>
      <p><span class="who">命令:</span><span class="mono">'_.zoom _e</span></p>
      <p><span class="who">命令:</span><span class="mono">hh</span></p>
    </div>
    <input class="prompt" aria-label="命令行" value="拾取第一条直线:">
  </div>
</section>

<div class="status">
  <output class="coords">-390.2220, 2667.0794, 0.0000</output>
  <button class="st">捕捉</button>
  <button class="st">栅格</button>
  <button class="st">正交</button>
  <button class="st">极轴</button>
  <button class="st down">对象捕捉</button>
  <button class="st">对象追踪</button>
  <button class="st">线宽</button>
  <button class="st down">模型</button>
</div>

<footer class="taskbar">
  <button class="start">
    <svg class="flag" viewBox="0 0 20 20"><path d="M3 4q4-3 7-1L9 9Q6 7 2 9z" fill="#ef5b2c"/><path d="M11 3q3 2 7 0l-2 6q-4 2-6 0z" fill="#82cc37"/><path d="M2 10q4-2 6 0l-1 6q-3-2-6 0z" fill="#4a90ee"/><path d="M10 10q3 2 6 0l-2 6q-3 2-6 0z" fill="#ffd02d"/></svg>
    <span>开始</span>
  </button>
  <div class="quick">
    <button class="ql" aria-label="浏览器"><svg viewBox="0 0 18 18"><path d="M13 11q-2 4-6 3-4-2-3-6 2-4 6-3 4 1 3 5H6" fill="none" stroke="#5bb9f5" stroke-width="2.500"/><path d="M3 16Q-1 13 6 6t11-3" fill="none" stroke="#b8e4ff" stroke-width="1.500"/></svg></button>
    <button class="ql" aria-label="显示桌面"><svg viewBox="0 0 18 18"><rect x="2" y="2" width="13" height="14" rx="3" fill="#e8f4ff" stroke="#54a7e4"/><path d="M12 7H5v6h6V9" fill="none" stroke="#267ebc" stroke-width="1.500"/><path d="M7 10l7-7 2 2-7 7z" fill="#d7b35b" stroke="#674f2b" stroke-width="0.500"/></svg></button>
    <button class="ql" aria-label="媒体播放器"><svg viewBox="0 0 18 18"><path d="M1 9a8 8 0 018-8v8z" fill="#ee8a2c"/><path d="M9 1a8 8 0 018 8H9z" fill="#5ab94b"/><path d="M1 9h16a8 8 0 01-16 0z" fill="#4379ce"/><circle cx="9" cy="9" r="5.500" fill="#f4faff"/><path d="M7 6l6 3-6 3z" fill="#1a4d99"/></svg></button>
    <span class="more">»</span>
  </div>
  <div class="tasks">
    <button class="task on"><svg viewBox="0 0 16 16"><path d="M0 0h16v16H0z" fill="#fff"/><path d="M1 1h14v14H1z" fill="#1688ad"/><text x="4" y="12" class="appletter">a</text></svg><span>AutoCAD 2004 - [...</span></button>
    <button class="task"><svg viewBox="0 0 16 16"><path d="M4 0h9l3 3v13H4z" fill="#fff" stroke="#888"/><circle cx="6" cy="8" r="4" fill="none" stroke="#1666b5" stroke-width="2"/><path d="M2 8h8M1 12Q5 5 13 4" stroke="#2e9ce6" stroke-width="1.500" fill="none"/></svg><span>新浪邮件 - Micro...</span></button>
    <button class="task"><svg viewBox="0 0 16 16"><path d="M4 0h9l3 3v13H4z" fill="#fff" stroke="#888"/><path d="M10 7h4M10 9h4M6 12h8M6 14h8" stroke="#8ba5cd"/><path d="M0 2h10v8H0z" fill="#e6eefc" stroke="#183d91"/><path d="M2 4l1.500 5L5 5l1.500 4L8 4" fill="none" stroke="#183d91" stroke-width="1.300"/></svg><span>文档 1 - Microso...</span></button>
  </div>
  <button class="ime" aria-label="输入法"><span>MS</span><span class="py">PY</span></button>
  <div class="tray"></div>
</footer>

<aside class="balloon">
  <div class="bhead">
    <svg class="info" viewBox="0 0 18 18"><path d="M9 1a7 7 0 014 13l-1 3-3-2A7 7 0 019 1z" fill="#dfecfb" stroke="#8298b8"/><path d="M8 4h3v2H8zM7 7h4v5h1v1H7v-1h1V8H7z" fill="#1748c5"/></svg>
    <strong>通信中心</strong>
    <button class="bclose" aria-label="关闭通知"><svg viewBox="0 0 14 14"><path d="M3 3l8 8M11 3l-8 8" stroke="#000" stroke-width="2"/></svg></button>
  </div>
  <p>使软件保持最新的简单方法。</p>
  <a href="#update">单击此处。</a>
  <svg class="tail" viewBox="0 0 28 13"><path d="M1 0l25 12L18 0z" fill="#ffffe1"/><path d="M1 1l25 11L18 1" fill="none" stroke="#000"/></svg>
</aside>

<aside class="brand">
  <svg class="cube" viewBox="0 0 42 42"><path d="M2 17L17 3q3-3 6-1l-4 15-5 4q-7-3-12-4z" fill="#f58220"/><path d="M22 2q3-1 6 2l11 13q3 3 1 6l-8 12-12-16z" fill="#2bb34a"/><path d="M2 17q9 0 17 3l13 15-13 6q-3 1-6-1L4 34q-3-3-3-7z" fill="#2397dc"/><path d="M12 35l3-13 11 8M13 30l8-4" fill="none" stroke="#fff" stroke-width="3"/><path d="M18 6q-10 4-9 9l8-2" fill="none" stroke="#ffe14e" stroke-width="2.500"/><path d="M26 9l9 8q0 8-4 10z" fill="none" stroke="#e8ff84" stroke-width="2.500"/></svg>
  <div class="brandtext"><span class="bname">CAD之家</span><span class="burl">WWW.CADZJ.COM</span></div>
</aside>
</body>
</html>
```
FILE: styles.css
```css
* { box-sizing: border-box; }

body {
  margin: 0;
  height: 100vh;
  display: flex;
  flex-direction: column;
  overflow: hidden;
  position: relative;
  background: #ece9d8;
  color: #000;
  font-family: "Noto Sans CJK SC", sans-serif;
  font-feature-settings: "hwid";
  font-size: 12px;
  line-height: 16px;
}

button, select, input {
  font: inherit;
  font-feature-settings: inherit;
  color: inherit;
  margin: 0;
  padding: 0;
  border: 0;
  background: none;
}

h1, p { margin: 0; }
svg, i { display: block; flex: none; }
.defs { position: absolute; width: 0; height: 0; }

/* Title bar */
.titlebar {
  display: flex;
  align-items: center;
  gap: 4px;
  height: 26px;
  flex: none;
  padding: 0 3px 0 2px;
  background: linear-gradient(#2a86f7 0, #0b5fe8 3px, #0054e3 8px, #005cf0 14px, #0267ff 20px, #0558e4 23px, #003dc8 26px);
}
.appicon { width: 16px; height: 16px; }
.appletter { font: bold 14px "Liberation Sans", sans-serif; fill: #fff; }
.qmark { font: bold 14px "Liberation Sans", sans-serif; fill: #fff; }
.title {
  flex: 1;
  color: #fff;
  font: bold 13px/18px "Liberation Mono", monospace;
  text-shadow: 1px 1px 0 #0a2a80;
}
.winbtns { display: flex; gap: 2px; }
.wbtn {
  width: 21px;
  height: 21px;
  border: 1px solid #fff;
  border-radius: 3px;
  background: linear-gradient(135deg, #7ea1f0, #2a5fdd 40%, #1b50cf);
}
.wbtn.close { background: linear-gradient(135deg, #f0a088, #e1532c 40%, #c83a12); }
.redtab {
  position: absolute;
  left: 343px;
  top: 0;
  width: 180px;
  height: 3px;
  border-radius: 0 0 6px 6px;
  background: #8c0b05;
}

/* Menu bar */
.menubar {
  display: flex;
  align-items: center;
  gap: 12px;
  height: 20px;
  flex: none;
  padding-left: 4px;
  border-bottom: 1px solid #fff;
}
.docicon { width: 16px; height: 16px; margin-right: -7px; }
.mdibtns { display: flex; gap: 1px; margin-left: auto; }
.mbtn {
  width: 17px;
  height: 17px;
  border: 1px solid #fff;
  border-right-color: #d6d2c2;
  border-bottom-color: #d6d2c2;
  border-radius: 2px;
  background: #f3f1e8;
}

/* Docked horizontal toolbars */
.dock { display: flex; gap: 1px; flex: none; }
.toolbar {
  display: flex;
  align-items: center;
  height: 27px;
  padding: 0 3px;
  border-top: 1px solid #fff;
  border-right: 1px solid #aca899;
  border-bottom: 1px solid #aca899;
  margin-bottom: 1px;
}
.grip {
  width: 7px;
  height: 23px;
  margin-right: 3px;
  border: solid #c5c2b0;
  border-width: 0 1px;
  background: linear-gradient(90deg, #fff 2px, #c5c2b0 2px 3px, #fff 3px);
}
.tb {
  display: flex;
  align-items: center;
  justify-content: center;
  width: 23px;
  height: 22px;
  flex: none;
}
.ico { width: 18px; height: 18px; }
.sep { width: 2px; height: 19px; margin: 0 2px; border-left: 1px solid #c5c2b0; border-right: 1px solid #fff; }
.sep.wide { margin: 0 3px; }
.tiny { width: 12px; height: 22px; display: flex; align-items: center; justify-content: center; }
.tiny i { border: 3px solid transparent; border-top-color: #aca899; border-bottom: 0; }

.combo {
  display: flex;
  align-items: center;
  height: 22px;
  padding-left: 4px;
  border: 1px solid #c5c2b0;
  color: #aca899;
}
.combo.plain { padding-left: 8px; }
.combo select {
  flex: 1;
  min-width: 0;
  appearance: none;
  color: #aca899;
  opacity: 1;
}
.w100 { width: 100px; }
.w120 { width: 120px; }
.w125 { width: 125px; }
.w150 { width: 150px; }
.w160 { width: 160px; }
.w300 { width: 300px; }
.drop {
  display: flex;
  align-items: center;
  justify-content: center;
  width: 17px;
  height: 18px;
  border: 1px solid #fff;
  border-radius: 2px;
  background: #efede2;
  color: #c4c1b2;
}
.drop svg, .sb svg { width: 9px; height: 7px; }
.mini { width: 16px; height: 16px; }
.swatch { width: 11px; height: 11px; margin: 0 4px 0 1px; border: 1px solid #000; background: #fff; }
.rule { width: 36px; height: 1px; margin-right: 4px; background: #000; }
.rule.long { width: 60px; margin-right: 5px; }

/* Work area */
.work { display: flex; flex: 1; min-height: 0; }
.vbar {
  align-self: flex-start;
  display: flex;
  flex-direction: column;
  align-items: center;
  flex: none;
  width: 25px;
  padding: 3px 0 4px;
  border: 1px solid #aca899;
  border-width: 0 1px 1px 0;
  box-shadow: inset 1px 1px 0 #fff;
}
.draw { margin-right: 1px; }
.dims { margin-right: 1px; }
.vgrip {
  width: 20px;
  height: 6px;
  margin-bottom: 2px;
  border: solid #c5c2b0;
  border-width: 0 0 1px;
  background: linear-gradient(#fff 2px, #c5c2b0 2px 3px, #fff 3px);
}
.vsep { width: 19px; height: 2px; margin: 2px 0; border-top: 1px solid #aca899; border-bottom: 1px solid #fff; }

.viewport {
  flex: 1;
  min-width: 0;
  display: grid;
  grid-template: 1fr 16px / 1fr 17px;
  border: solid;
  border-width: 2px 2px 0 1px;
  border-color: #716f64 #d9d6c6 #aca899 #716f64;
  margin-right: 2px;
}
.canvas { width: 100%; height: 100%; background: #000; }
.crisp { shape-rendering: crispEdges; fill: none; }
.wht { stroke: #fff; }
.red { stroke: #f00; }
.note { font-size: 22px; font-weight: 300; fill: #fff; }

.vscroll { display: flex; flex-direction: column; background: linear-gradient(90deg, #eeede5, #fdfdfb); }
.track.before { flex: 27; }
.track.after { flex: 73; }
.track.rest { flex: 50; }
.hscroll .before { flex: 26; }
.sb, .vthumb, .hthumb {
  display: flex;
  align-items: center;
  justify-content: center;
  width: 17px;
  height: 17px;
  flex: none;
  border: 1px solid #fff;
  border-radius: 2px;
  background: #c3d3fd;
  color: #4d6185;
  box-shadow: inset -1px -1px 0 #9cb3e8;
}
.sb svg.up { transform: rotate(180deg); }
.sb svg.left { transform: rotate(90deg); }
.sb svg.right { transform: rotate(-90deg); }
.vthumb, .hthumb { gap: 1px; }
.vthumb { flex-direction: column; }
.vthumb i { width: 7px; height: 1px; background: #fff; }
.hthumb i { width: 1px; height: 7px; background: #fff; }

.tabrow { display: flex; align-items: stretch; min-width: 0; }
.nav { width: 18px; border: 1px solid #fff; border-right-color: #aca899; border-bottom-color: #aca899; flex: none; }
.tabs { display: flex; margin-left: 4px; flex: 1; }
.tab { display: grid; width: 48px; height: 14px; margin-right: -3px; place-items: center; flex: none; line-height: 14px; }
.tab svg, .tab span { grid-area: 1 / 1; }
.tab svg { width: 100%; height: 14px; overflow: visible; }
.tab.on { width: 42px; color: #fff; font-weight: bold; }
.hscroll { display: flex; width: 34%; background: linear-gradient(#eeede5, #fdfdfb); }
.hscroll .sb, .hthumb { height: 15px; }
.split { width: 5px; height: 13px; margin-right: 1px; border: 1px solid #c5c2b0; }
.corner { background: #ece9d8; }

/* Command window */
.cmdarea {
  display: flex;
  flex: none;
  padding: 5px 0 2px 6px;
  border-top: 1px solid #000;
  box-shadow: 0 -1px 0 #aca899, 0 -4px 0 #ece9d8, 0 -6px 0 #fff;
  margin-top: 5px;
  gap: 4px;
}
.cmdgrip { width: 7px; margin: 4px 0; border: solid #c5c2b0; border-width: 0 1px 1px; background: linear-gradient(90deg, #fff 2px, #c5c2b0 2px 3px, #fff 3px); }
.cmdbox {
  flex: 1;
  background: #fff;
  border-left: 1px solid #000;
  border-top: 1px solid #000;
  outline: 1px solid #aca899;
}
.log { padding: 1px 0 6px 1px; border-bottom: 1px solid #aca899; }
.log p { display: flex; align-items: center; height: 13px; font-size: 13px; line-height: 13px; white-space: pre; }
.who { width: 46px; }
.mono { font: 13px/13px "Liberation Mono", monospace; }
.prompt { display: block; width: 100%; height: 17px; padding: 0 0 0 1px; font-size: 15px; font-weight: 300; line-height: 17px; }

/* Status bar */
.status {
  display: flex;
  align-items: center;
  gap: 4px;
  height: 22px;
  flex: none;
  padding: 2px 4px 0;
  border-top: 1px solid #aca899;
}
.coords { width: 251px; height: 18px; border: 1px solid #aca899; padding-left: 1px; white-space: pre; }
.st {
  height: 18px;
  padding: 0 1px;
  border: 1px solid #fff;
  border-right-color: #aca899;
  border-bottom-color: #aca899;
}
.st.down { border-color: #000 #fff #fff #000; background: #f4f2ea; }

/* Taskbar */
.taskbar {
  display: flex;
  align-items: center;
  height: 30px;
  flex: none;
  background: linear-gradient(#1d52c4 0, #3f8cf3 2px, #2a66e0 5px, #245edb 10px, #2460de 25px, #1941a5 30px);
}
.start {
  display: flex;
  align-items: center;
  gap: 5px;
  width: 97px;
  height: 30px;
  padding-left: 9px;
  border-radius: 0 12px 12px 0;
  background: linear-gradient(#2f7d30 0, #6ab568 3px, #3d963c 8px, #3a953a 22px, #2a6f2b 30px);
  box-shadow: inset -3px 0 4px #276327;
  color: #fff;
  font-size: 19px;
  font-style: italic;
  line-height: 24px;
  text-shadow: 1px 1px 1px #1d4a1d;
}
.flag { width: 21px; height: 21px; }
.quick { display: flex; align-items: center; gap: 5px; width: 101px; padding-left: 10px; }
.ql { width: 18px; height: 18px; }
.ql svg { width: 18px; height: 18px; }
.more { color: #c6dcff; font-size: 18px; margin-left: 2px; padding-bottom: 8px; }
.tasks { display: flex; gap: 1px; flex: 1; }
.task {
  display: flex;
  align-items: center;
  gap: 4px;
  width: 159px;
  height: 24px;
  padding: 0 10px;
  border-radius: 3px;
  background: linear-gradient(#5a9cfa, #3c81f3 5px, #3a7ff0 20px, #2a63d8);
  color: #fff;
  white-space: nowrap;
}
.task.on { background: #1a4fb5; box-shadow: inset 1px 1px 2px #0c2f80; }
.task svg { width: 16px; height: 16px; }
.ime {
  width: 17px;
  height: 18px;
  margin-right: 63px;
  border: 1px solid #000;
  background: #000;
  color: #fff;
  font: bold 9px/8px "Liberation Sans", sans-serif;
}
.ime span { display: block; }
.ime .py { background: linear-gradient(90deg, #ffe000 50%, #e00000 50%); color: #000; }
.tray { width: 94px; height: 30px; background: linear-gradient(#0f7ad8 0, #1ca8f4 3px, #129bea 24px, #0c6fc4 30px); }

/* Notification */
.balloon {
  position: absolute;
  right: 4px;
  bottom: 60px;
  width: 184px;
  height: 75px;
  padding: 8px 8px 4px 14px;
  border: 1px solid #000;
  border-radius: 12px;
  background: #ffffe1;
}
.bhead { display: flex; align-items: center; gap: 8px; height: 18px; margin-left: -6px; }
.bhead strong { font-size: 13px; }
.info { width: 18px; height: 18px; }
.bclose { width: 16px; height: 16px; margin-left: auto; border: 1px solid #aca899; background: #ece9d8; }
.balloon p { margin-top: 3px; line-height: 16px; white-space: nowrap; }
.balloon a { display: inline-block; margin-top: 2px; color: #00f; line-height: 16px; }
.tail { position: absolute; left: 124px; top: 73px; width: 28px; height: 13px; }

/* Site badge */
.brand {
  position: absolute;
  right: 5px;
  bottom: 5px;
  width: 150px;
  height: 45px;
  display: flex;
  align-items: center;
  gap: 6px;
  padding-left: 3px;
  background: #fff;
}
.cube { width: 41px; height: 42px; }
.brandtext { display: flex; flex-direction: column; }
.bname { color: #1b9ae4; font: 500 23px/28px "Liberation Sans", "Noto Sans CJK SC", sans-serif; white-space: nowrap; }
.burl { color: #6d7f90; font: bold 10px/11px "Liberation Sans", sans-serif; }
```
